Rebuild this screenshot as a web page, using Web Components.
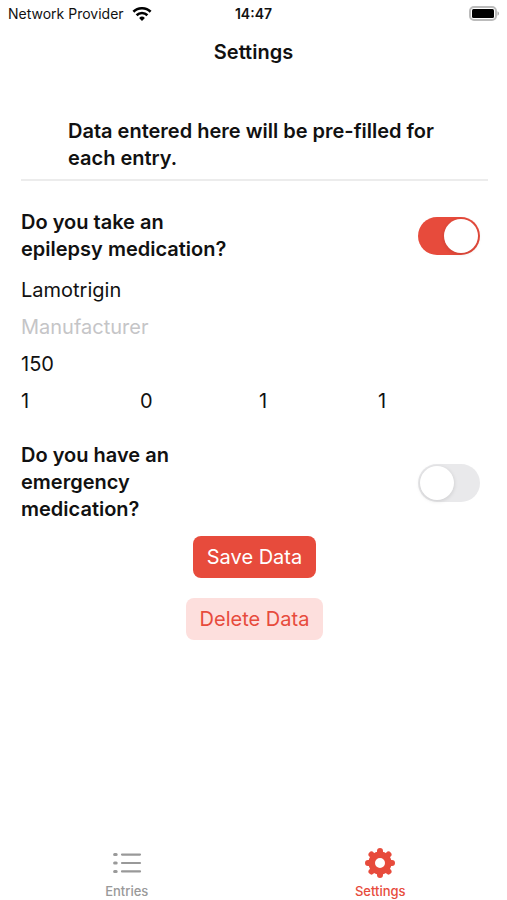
<!DOCTYPE html>
<html lang="en">
<head>
<meta charset="utf-8">
<meta name="viewport" content="width=device-width, initial-scale=1">
<title>Settings</title>
<style>
  :root{
    --red: #e74b3c;
    --red-light: #fddfdd;
    --gray: #999;
    --placeholder: #c5c5c7;
    --line: #ececec;
    --padding-page: 21px;
  }

  body{
    margin: 0;
    font: 20px/27px Inter, "Liberation Sans", sans-serif;
    color: #111;
    background: #fff;
  }
</style>
</head>
<body>

<settings-app></settings-app>

<script>
/**
 * Status bar: carrier, clock and battery
 */
customElements.define('status-bar', class extends HTMLElement {
  constructor () {
    super()
    this.attachShadow({ mode: 'open' })
    this.shadowRoot.innerHTML = `
<style>
  :host{
    display: grid;
    grid-template-columns: 1fr auto 1fr;
    align-items: center;
    height: 28px;
    padding: 0 8px;
    font-size: 14px;
    line-height: 20px;
  }

  .carrier{
    display: flex;
    align-items: center;
    gap: 8px;
    white-space: nowrap;
  }

  time{
    font-weight: 600;
  }

  svg{
    display: block;
  }

  .battery{
    justify-self: end;
  }
</style>

<span class="carrier">
  <slot></slot>
  <svg width="20" height="15" viewBox="0 0 20 15" fill="none" stroke="#000" stroke-width="2.6" aria-hidden="true">
    <path d="M1.4 4.8a12.3 12.3 0 0 1 17.2 0"/>
    <path d="M4.6 8.2a7.7 7.7 0 0 1 10.8 0"/>
    <path d="M10 13.9l-2.9-3a4.1 4.1 0 0 1 5.8 0z" fill="#000" stroke="none"/>
  </svg>
</span>
<time>${this.getAttribute('time')}</time>
<svg class="battery" width="31" height="16" viewBox="0 0 31 16" aria-hidden="true">
  <rect x="2" y="1" width="26" height="13" rx="4" fill="#fff" stroke="#bbb" stroke-width="2"/>
  <rect x="4" y="3" width="22" height="9" rx="1.5" fill="#000"/>
  <path d="M29.5 5.3c2 .8 2 3.6 0 4.4z" fill="#aaa"/>
</svg>
`
  }
})

/**
 * Yes/no question with a switch on its right side
 */
customElements.define('toggle-question', class extends HTMLElement {
  constructor () {
    super()
    this.attachShadow({ mode: 'open' })
    this.shadowRoot.innerHTML = `
<style>
  :host{
    display: flex;
    align-items: center;
    justify-content: space-between;
    padding-right: 8px;
  }

  label{
    max-width: 212px;
    font-weight: 600;
  }

  input{
    appearance: none;
    flex: none;
    display: flex;
    box-sizing: border-box;
    width: 62px;
    height: 38px;
    margin: 0;
    padding: 2px;
    border-radius: 19px;
    background: #e9e9eb;
    cursor: pointer;
  }

  input::before{
    content: '';
    width: 34px;
    height: 34px;
    border-radius: 50%;
    background: #fff;
    box-shadow: 0 1px 4px #0002;
  }

  input:checked{
    justify-content: flex-end;
    background: var(--red);
  }
</style>

<label for="switch">${this.getAttribute('question')}</label>
<input id="switch" type="checkbox" role="switch" ${this.hasAttribute('checked') ? 'checked' : ''}>
`
  }
})

/**
 * Borderless text field
 */
customElements.define('text-field', class extends HTMLElement {
  constructor () {
    super()
    const label = this.getAttribute('label')

    this.attachShadow({ mode: 'open' })
    this.shadowRoot.innerHTML = `
<style>
  :host{
    display: block;
    min-width: 0;
  }

  input{
    display: block;
    box-sizing: border-box;
    width: 100%;
    height: 37px;
    padding: 0;
    border: none;
    outline: none;
    font: inherit;
    color: inherit;
    background: none;
  }

  input::placeholder{
    color: var(--placeholder);
    opacity: 1;
  }
</style>

<input aria-label="${label}" placeholder="${label}" value="${this.getAttribute('value') || ''}">
`
  }
})

/**
 * Filled button, `light` gives the pale variant
 */
customElements.define('action-button', class extends HTMLElement {
  constructor () {
    super()
    this.attachShadow({ mode: 'open' })
    this.shadowRoot.innerHTML = `
<style>
  :host{
    display: block;
  }

  button{
    display: block;
    height: 42px;
    padding: 0 14px;
    border: none;
    border-radius: 8px;
    font: inherit;
    color: #fff;
    background: var(--red);
    cursor: pointer;
  }

  :host([light]) button{
    color: var(--red);
    background: var(--red-light);
  }
</style>

<button type="button"><slot></slot></button>
`
  }
})

/**
 * Bottom navigation item
 */
customElements.define('tab-item', class extends HTMLElement {
  constructor () {
    super()
    this.attachShadow({ mode: 'open' })
    this.shadowRoot.innerHTML = `
<style>
  :host{
    display: block;
    flex: 1;
    color: var(--gray);
  }

  :host([active]){
    color: var(--red);
  }

  a{
    display: flex;
    flex-direction: column;
    align-items: center;
    gap: 4px;
    padding-bottom: 1px;
    font-size: 13px;
    font-weight: 500;
    line-height: 16px;
    color: inherit;
    text-decoration: none;
  }
</style>

<a href="${this.getAttribute('href')}">
  <slot name="icon"></slot>
  <slot></slot>
</a>
`
  }
})

customElements.define('settings-app', class extends HTMLElement {
  constructor () {
    super()
    this.attachShadow({ mode: 'open' })
    this.shadowRoot.innerHTML = `
<style>
  :host{
    display: flex;
    flex-direction: column;
    min-height: 100vh;
  }

  h1{
    margin: 0;
    padding: 11px 0 10px;
    font-size: 20px;
    font-weight: 600;
    text-align: center;
  }

  main{
    flex: 1;
    padding: 42px 19px 20px var(--padding-page);
  }

  .intro{
    margin: 0 0 28px;
    padding: 0 47px 7px;
    border-bottom: 2px solid var(--line);
    font-weight: 600;
  }

  .fields{
    margin: 8px 0 23px;
  }

  .doses{
    display: grid;
    grid-template-columns: repeat(4, 1fr);
    gap: 9px;
  }

  .actions{
    display: flex;
    flex-direction: column;
    align-items: center;
    gap: 20px;
    padding-top: 13px;
  }

  nav{
    display: flex;
  }

  nav svg{
    display: block;
  }
</style>

<status-bar time="14:47">Network Provider</status-bar>
<h1>Settings</h1>

<main>
  <p class="intro">Data entered here will be pre-filled for each entry.</p>

  <toggle-question question="Do you take an epilepsy medication?" checked></toggle-question>
  <div class="fields">
    <text-field label="Name" value="Lamotrigin"></text-field>
    <text-field label="Manufacturer"></text-field>
    <text-field label="Dosage" value="150"></text-field>
    <div class="doses">
      <text-field label="Morning" value="1"></text-field>
      <text-field label="Noon" value="0"></text-field>
      <text-field label="Evening" value="1"></text-field>
      <text-field label="Night" value="1"></text-field>
    </div>
  </div>

  <toggle-question question="Do you have an emergency medication?"></toggle-question>

  <div class="actions">
    <action-button>Save Data</action-button>
    <action-button light>Delete Data</action-button>
  </div>
</main>

<nav>
  <tab-item href="#entries">
    <svg slot="icon" width="32" height="32" viewBox="0 0 32 32" fill="none" stroke="currentColor" stroke-width="2.2" stroke-linecap="round" aria-hidden="true">
      <path d="M3.6 7.6h1.6M3.6 16h1.6M3.6 24.4h1.6" stroke-width="3"/>
      <path d="M11 7.6h18M11 16h18M11 24.4h18"/>
    </svg>
    Entries
  </tab-item>
  <tab-item href="#settings" active>
    <svg slot="icon" width="32" height="32" viewBox="-16 -16 32 32" fill="none" stroke="currentColor" aria-hidden="true">
      <circle r="8.3" stroke-width="6.6"/>
      <path d="M0-10v-2M0 10v2M10 0h2M-10 0h-2M7.1-7.1l1.4-1.4M-7.1-7.1l-1.4-1.4M7.1 7.1l1.4 1.4M-7.1 7.1l-1.4 1.4" stroke-width="6" stroke-linecap="round"/>
    </svg>
    Settings
  </tab-item>
</nav>
`
  }
})
</script>
</body>
</html>
